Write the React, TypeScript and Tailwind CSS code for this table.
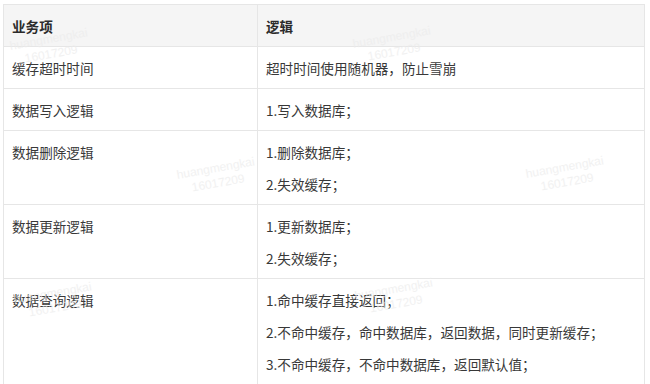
import React from "react";

const rows: { k: string; v: string[] }[] = [
  { k: "缓存超时时间", v: ["超时时间使用随机器，防止雪崩"] },
  { k: "数据写入逻辑", v: ["1.写入数据库；"] },
  { k: "数据删除逻辑", v: ["1.删除数据库；", "2.失效缓存；"] },
  { k: "数据更新逻辑", v: ["1.更新数据库；", "2.失效缓存；"] },
  {
    k: "数据查询逻辑",
    v: [
      "1.命中缓存直接返回；",
      "2.不命中缓存，命中数据库，返回数据，同时更新缓存；",
      "3.不命中缓存，不命中数据库，返回默认值；",
    ],
  },
];

const marks = [
  { l: 10, t: 32 },
  { l: 353, t: 30 },
  { l: 177, t: 161 },
  { l: 526, t: 160 },
  { l: 14, t: 286 },
  { l: 355, t: 282 },
];

export default function App() {
  return (
    <div
      className="relative w-[650px] h-[384px] bg-white overflow-hidden pl-[3px] pt-[4px]"
      style={{ fontFamily: '"Noto Sans CJK SC", "Noto Sans", sans-serif' }}
    >
      <div className="w-[642px] border-t border-l border-[#e6e6e6] text-[13.6px] text-[#383838]">
        <div className="flex bg-[#f5f5f5] font-bold text-[#2b2b2b]">
          <div className="w-[254px] border-r border-b border-[#e6e6e6] pl-[8px] pt-[10px] pb-[9px] leading-[22px]">
            业务项
          </div>
          <div className="flex-1 border-r border-b border-[#e6e6e6] pl-[8px] pt-[10px] pb-[9px] leading-[22px]">
            逻辑
          </div>
        </div>
        {rows.map((r) => (
          <div key={r.k} className="flex">
            <div className="w-[254px] border-r border-b border-[#e6e6e6] pl-[8px] pt-[10px] pb-[9px] leading-[22px]">
              {r.k}
            </div>
            <div className="flex-1 flex flex-col gap-[10px] border-r border-b border-[#e6e6e6] pl-[8px] pt-[10px] pb-[9px] leading-[22px]">
              {r.v.map((line) => (
                <div key={line}>{line}</div>
              ))}
            </div>
          </div>
        ))}
      </div>
      {marks.map((m, i) => (
        <div
          key={i}
          className="absolute pointer-events-none w-[80px] text-center text-[12px] leading-[15px] text-[#ececec] opacity-70 -rotate-[10deg]"
          style={{ left: m.l, top: m.t, fontFamily: '"Liberation Sans", Arial, sans-serif' }}
        >
          <div>huangmengkai</div>
          <div>16017209</div>
        </div>
      ))}
    </div>
  );
}
